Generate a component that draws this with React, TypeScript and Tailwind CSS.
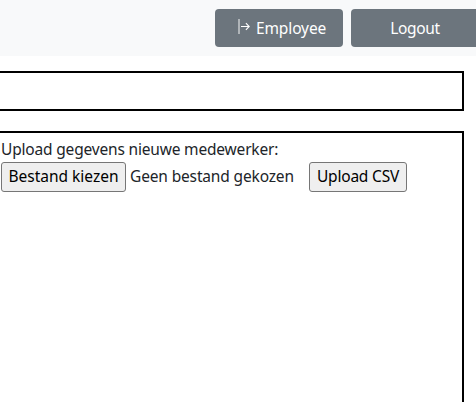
export default function App() {
  return (
    <div className="flex h-[402px] w-[476px] flex-col overflow-hidden bg-white font-['Noto_Sans',sans-serif] text-[15.5px] leading-6 text-[#212529]">
      <header className="flex h-14 shrink-0 gap-2 bg-[#f8f9fa] pl-[215px] pt-[9px] text-white">
        <button className="flex h-[38px] w-32 shrink-0 items-center rounded bg-[#6c757d] pl-[22px]">
          <svg width="14" height="18" viewBox="0 0 14 18" fill="none" className="mb-0.5 mr-[5px] shrink-0">
            <path d="M2 1v15" stroke="#b0b5b9" strokeWidth="2" />
            <path d="M4 8.5h8.3M8.9 5.2 12.2 8.5l-3.3 3.3" stroke="#fff" strokeWidth="1.1" />
          </svg>
          <span className="pb-px tracking-[-0.12px]">Employee</span>
        </button>
        <button className="flex h-[38px] w-32 shrink-0 items-center justify-center rounded bg-[#6c757d]">
          <span className="pb-px tracking-[-0.35px]">Logout</span>
        </button>
      </header>
      <main className="flex grow flex-col gap-5 pr-3 pt-[15px]">
        <section className="h-10 shrink-0 border-y-2 border-r-2 border-black" />
        <section className="grow border-r-2 border-t-2 border-black pl-px pt-1">
          <p className="mb-px tracking-[-0.18px]">Upload gegevens nieuwe medewerker:</p>
          <div className="flex items-center">
            <button className="flex h-[30px] w-[125px] shrink-0 items-center justify-center rounded-[3px] border border-[#767676] bg-[#efefef] text-black">
              <span className="pb-0.5">Bestand kiezen</span>
            </button>
            <span className="ml-1 w-[179px] shrink-0 whitespace-nowrap pb-0.5 tracking-[-0.15px]">Geen bestand gekozen</span>
            <button className="flex h-[30px] w-[98px] shrink-0 items-center justify-center rounded-[3px] border border-[#767676] bg-[#efefef] text-black">
              <span className="pb-0.5 tracking-[-0.2px]">Upload CSV</span>
            </button>
          </div>
        </section>
      </main>
    </div>
  );
}
